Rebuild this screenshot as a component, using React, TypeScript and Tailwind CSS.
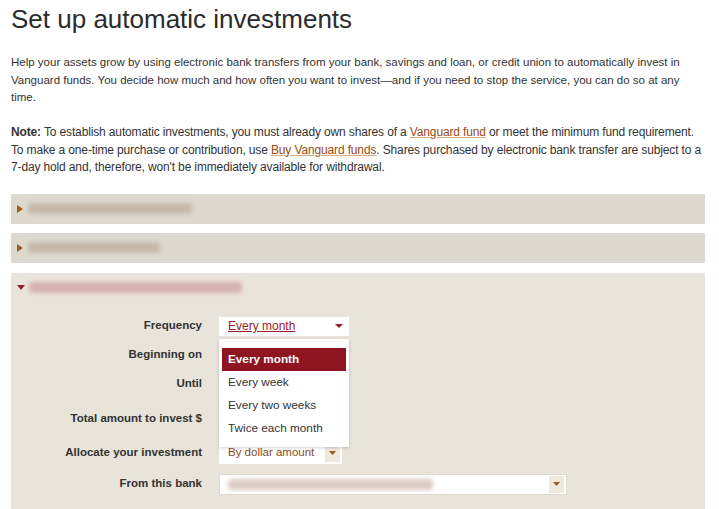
import React from "react";

const font = { fontFamily: '"Liberation Sans", Arial, sans-serif' };

const Blur = ({ w, color }: { w: string; color: string }) => (
    <div className={`h-[11px] rounded-sm blur-[2px] ${w} ${color}`} />
);

const RightArrow = () => (
    <svg width="6" height="8" viewBox="0 0 6 8" className="shrink-0">
        <path d="M0 0 L6 4 L0 8 Z" fill="#a5581f" />
    </svg>
);

const DownArrow = ({ color = "#9b1b2a", w = 9, h = 5 }: { color?: string; w?: number; h?: number }) => (
    <svg width={w} height={h} viewBox={`0 0 ${w} ${h}`} className="shrink-0">
        <path d={`M0 0 L${w} 0 L${w / 2} ${h} Z`} fill={color} />
    </svg>
);

const CollapsedBar = ({ w }: { w: string }) => (
    <div className="h-[30px] bg-[#ddd9ce] flex items-center gap-[5px] pl-[6px]">
        <RightArrow />
        <Blur w={w} color="bg-[#c6b8a9]" />
    </div>
);

const Label = ({ children }: { children: React.ReactNode }) => (
    <div className="w-[191px] text-right font-bold text-[11.5px] text-[#333]">{children}</div>
);

const SelectButton = () => (
    <div className="w-[15px] h-[17px] bg-[#efe8dd] flex items-center justify-center">
        <DownArrow color="#9a5a22" w={7} h={4} />
    </div>
);

export default function App() {
    return (
        <div className="min-h-screen bg-white pl-[11px] pr-[14px] text-[#333]" style={font}>
            <h1 className="pt-[4px] text-[26px] leading-[31px] font-normal text-[#2b2b2b]">
                Set up automatic investments
            </h1>
            <p className="mt-[19px] text-[11.5px] leading-[17.5px] whitespace-nowrap">
                Help your assets grow by using electronic bank transfers from your bank, savings and loan, or credit union to automatically invest in<br />
                Vanguard funds. You decide how much and how often you want to invest—and if you need to stop the service, you can do so at any<br />
                time.
            </p>
            <p className="mt-[17.5px] text-[12px] leading-[17.5px] tracking-[-0.14px] whitespace-nowrap">
                <span className="font-bold">Note:</span> To establish automatic investments, you must already own shares of a{" "}
                <span className="text-[#9c4a12] underline decoration-[#d9a77e]">Vanguard fund</span> or meet the minimum fund requirement.<br />
                To make a one-time purchase or contribution, use{" "}
                <span className="text-[#9c4a12] underline decoration-[#d9a77e]">Buy Vanguard funds</span>. Shares purchased by electronic bank transfer are subject to a<br />
                7-day hold and, therefore, won't be immediately available for withdrawal.
            </p>

            <div className="mt-[17px] flex flex-col gap-[9px]">
                <CollapsedBar w="w-[164px]" />
                <CollapsedBar w="w-[132px]" />
                <div className="mt-px bg-[#e8e4da] pb-[20px]">
                    <div className="h-[30px] flex items-center gap-[4px] pl-[6px]">
                        <DownArrow w={8} h={5} />
                        <Blur w="w-[213px]" color="bg-[#d6b1b0]" />
                    </div>
                    <div className="pt-[9px] flex flex-col">
                        <div className="h-[29px] flex items-center gap-[17px]">
                            <Label>Frequency</Label>
                            <div className="relative">
                                <div className="w-[130px] h-[19px] bg-white flex items-center justify-between pl-[9px] pr-[6px]">
                                    <span className="text-[12px] text-[#9b1b2a] underline">Every month</span>
                                    <DownArrow w={8} h={4} />
                                </div>
                                <div className="absolute z-10 top-[22px] left-0 w-[130px] h-[108px] bg-white shadow-[0_1px_3px_rgba(0,0,0,0.18)] pt-[9px] px-[3px] text-[11.75px]">
                                    <div className="h-[23px] bg-[#8e1520] text-white font-bold flex items-center pl-[6px]">Every month</div>
                                    <div className="h-[23px] flex items-center pl-[6px] text-[#333]">Every week</div>
                                    <div className="h-[23px] flex items-center pl-[6px] text-[#333]">Every two weeks</div>
                                    <div className="h-[23px] flex items-center pl-[6px] text-[#333]">Twice each month</div>
                                </div>
                            </div>
                        </div>
                        <div className="h-[29px] flex items-center gap-[17px]">
                            <Label>Beginning on</Label>
                        </div>
                        <div className="h-[29px] flex items-center gap-[17px]">
                            <Label>Until</Label>
                        </div>
                        <div className="h-[40px] flex items-center gap-[17px]">
                            <Label>Total amount to invest $</Label>
                        </div>
                        <div className="h-[29px] flex items-center gap-[17px]">
                            <Label>Allocate your investment</Label>
                            <div className="w-[123px] h-[22px] bg-white flex items-center justify-between pl-[9px] pr-[2px]">
                                <span className="text-[11.5px] text-[#8a4a1c]">By dollar amount</span>
                                <SelectButton />
                            </div>
                        </div>
                        <div className="h-[33px] flex items-center gap-[17px]">
                            <Label>From this bank</Label>
                            <div className="w-[348px] h-[21px] bg-white border border-[#dedad2] flex items-center justify-between pl-[8px] pr-[2px]">
                                <Blur w="w-[205px]" color="bg-[#dccdc4]" />
                                <SelectButton />
                            </div>
                        </div>
                    </div>
                </div>
            </div>
        </div>
    );
}
